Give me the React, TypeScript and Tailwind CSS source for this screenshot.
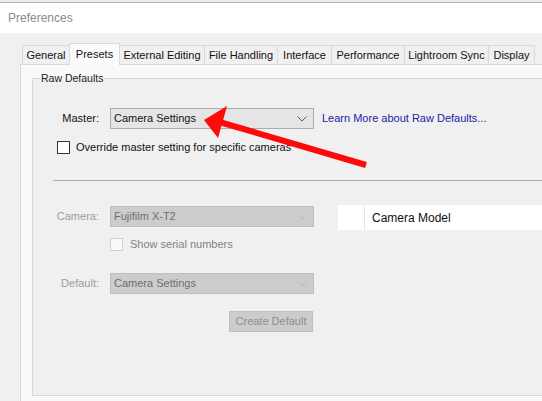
import React from 'react'

const tabs = [
  { label: 'General', w: 'w-[48px]' },
  { label: 'Presets', w: 'w-[51px]', active: true },
  { label: 'External Editing', w: 'w-[86px]' },
  { label: 'File Handling', w: 'w-[74px]' },
  { label: 'Interface', w: 'w-[55px]' },
  { label: 'Performance', w: 'w-[74px]' },
  { label: 'Lightroom Sync', w: 'w-[85px]' },
  { label: 'Display', w: 'w-[47px]' },
]

function Chevron({ color }: { color: string }) {
  return (
    <svg width="10" height="6" viewBox="0 0 10 6" className="shrink-0">
      <path d="M0.5 0.5 L5 5 L9.5 0.5" fill="none" stroke={color} strokeWidth="1" />
    </svg>
  )
}

function Select({ value, disabled }: { value: string; disabled?: boolean }) {
  return (
    <div
      className={`flex h-[21px] w-[204px] items-center justify-between border pl-[3px] pr-[6px] ${
        disabled ? 'border-[#bfbfbf] bg-[#cccccc] text-[#6f6f6f]' : 'border-[#adadad] bg-[#e5e5e5] text-[#111]'
      }`}
    >
      <span>{value}</span>
      <Chevron color={disabled ? '#b4b4b4' : '#5a5a5a'} />
    </div>
  )
}

export default function App() {
  return (
    <div className="relative h-[401px] w-[542px] overflow-hidden bg-[#f0f0f0] text-[11px] leading-none text-[#111] [font-family:'Liberation_Sans',Arial,sans-serif]">
      {/* window chrome */}
      <div className="h-[2px] bg-[#ebebeb]" />
      <div className="flex h-[31px] items-center border-t border-[#b5b5b5] bg-white pl-[8px] text-[12px] text-[#8a8a8a]">
        Preferences
      </div>

      {/* tabs */}
      <div className="mt-[10px] flex h-[21px] items-end pl-[22px]">
        {tabs.map((t, i) =>
          t.active ? (
            <div
              key={t.label}
              className={`relative z-10 -mb-px -ml-px flex h-[22px] ${t.w} items-start justify-center border border-b-0 border-[#d9d9d9] bg-[#fbfbfb] pt-[5px]`}
            >
              {t.label}
            </div>
          ) : (
            <div
              key={t.label}
              className={`flex h-[19px] ${t.w} ${i > 0 ? '-ml-px' : ''} items-center justify-center border border-b-0 border-[#d9d9d9] bg-[#f0f0f0]`}
            >
              {t.label}
            </div>
          ),
        )}
      </div>

      {/* tab page */}
      <div className="ml-[20px] h-[340px] border-l border-t border-[#d9d9d9] bg-[#f9f9f9] pl-[11px] pt-[13px]">
        <div className="relative h-[318px] border border-r-0 border-[#d6d6d6] bg-[#f0f0f0]">
          <span className="absolute -top-[6px] left-[7px] bg-[linear-gradient(to_bottom,#f9f9f9_50%,#f0f0f0_50%)] px-[1px] text-[10.5px] text-[#222]">
            Raw Defaults
          </span>

          {/* master row */}
          <div className="mt-[29px] flex items-center">
            <div className="w-[66px] text-right">Master:</div>
            <div className="ml-[11px]">
              <Select value="Camera Settings" />
            </div>
            <span className="ml-[8px] text-[#2222a6]">Learn More about Raw Defaults...</span>
          </div>

          <div className="mt-[12px] flex items-center pl-[24px]">
            <div className="h-[13px] w-[13px] border border-[#333] bg-white" />
            <span className="ml-[6px]">Override master setting for specific cameras</span>
          </div>

          <div className="ml-[20px] mt-[26px] h-px bg-[#a9a9a9]" />

          <div className="mt-[25px] flex items-start">
            <div className="flex flex-col">
              <div className="flex items-center">
                <div className="w-[66px] text-right text-[#9d9d9d]">Camera:</div>
                <div className="ml-[11px]">
                  <Select value="Fujifilm X-T2" disabled />
                </div>
              </div>

              <div className="ml-[77px] mt-[11px] flex items-center">
                <div className="h-[13px] w-[13px] border border-[#cfcfcf] bg-[#fafafa]" />
                <span className="ml-[7px] text-[#838383]">Show serial numbers</span>
              </div>

              <div className="mt-[22px] flex items-center">
                <div className="w-[66px] text-right text-[#9d9d9d]">Default:</div>
                <div className="ml-[11px]">
                  <Select value="Camera Settings" disabled />
                </div>
              </div>

              <div className="mt-[17px] flex justify-end pr-px">
                <div className="flex h-[21px] w-[84px] items-center justify-center border border-[#bfbfbf] bg-[#cccccc] text-[#8e8e8e]">
                  Create Default
                </div>
              </div>
            </div>

            <div className="-mt-px ml-[24px] flex h-[25px] flex-1 items-center bg-white text-[12px]">
              <div className="h-full w-[27px] border-r border-[#e6e6e6]" />
              <span className="pl-[7px]">Camera Model</span>
            </div>
          </div>
        </div>
      </div>

      {/* red annotation arrow */}
      <svg className="pointer-events-none absolute left-0 top-0" width="542" height="401" viewBox="0 0 542 401">
        <line x1="216" y1="121" x2="366" y2="165" stroke="#fe0a0a" strokeWidth="6" />
        <polygon points="204,120 227,106 218,138" fill="#fe0a0a" />
      </svg>
    </div>
  )
}
